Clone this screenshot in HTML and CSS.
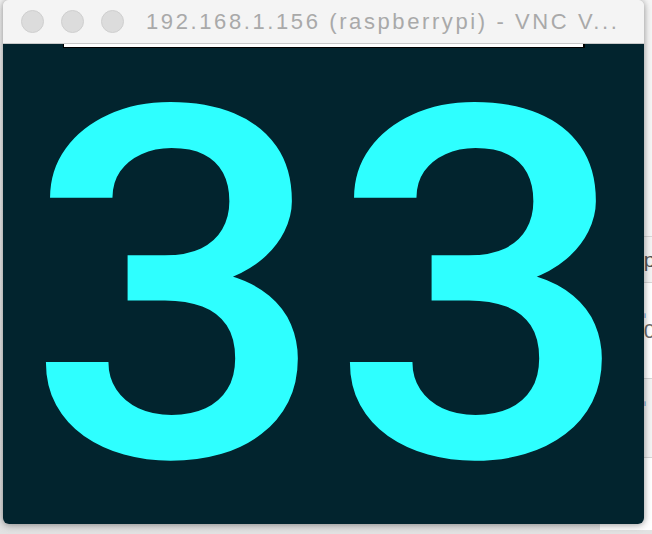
FILE: index.html
```html
<!DOCTYPE html>
<html>
<head>
<meta charset="utf-8">
<link rel="stylesheet" href="styles.css">
</head>
<body>
<div class="desktop">
  <div class="back-window">
    <div class="row row-a"></div>
    <div class="row row-b"><span class="cell">op</span></div>
    <div class="row row-a"><span class="mark">i</span><span class="cell num">20</span></div>
    <div class="row row-b"><span class="mark">i</span><span class="cell num">2</span></div>
    <div class="row row-a"><span class="cell num">2</span></div>
  </div>
  <div class="window">
    <div class="titlebar">
      <div class="lights">
        <span class="light"></span>
        <span class="light"></span>
        <span class="light"></span>
      </div>
      <div class="title">192.168.1.156 (raspberrypi) - VNC V...</div>
    </div>
    <div class="screen">
      <div class="topbar"></div>
      <div class="digits">
        <span class="digit">3</span><span class="digit">3</span>
      </div>
    </div>
  </div>
</div>
</body>
</html>
```
FILE: styles.css
```css
html, body {
  margin: 0;
  padding: 0;
}
body {
  width: 652px;
  height: 534px;
  overflow: hidden;
  background: #ececec;
  font-family: "Liberation Sans", Arial, sans-serif;
}
.desktop {
  position: relative;
  width: 652px;
  height: 534px;
  background: linear-gradient(#f2f2f2, #e2e2e2);
}
.back-window {
  position: absolute;
  left: 600px;
  top: 0;
  width: 200px;
  height: 530px;
  background: #f7f7f7;
  display: flex;
  flex-direction: column;
}
.row {
  display: flex;
  align-items: center;
  border-top: 1px solid #d6d6d6;
  font-size: 21px;
  color: #555;
  box-sizing: border-box;
}
.row-a { background: #ffffff; }
.row-b { background: #f3f3f3; }
.back-window .row:nth-child(1) { height: 236px; border-top: none; background: #f5f5f5; }
.back-window .row:nth-child(2) { height: 46px; }
.back-window .row:nth-child(3) { height: 96px; }
.back-window .row:nth-child(4) { height: 79px; }
.back-window .row:nth-child(5) { flex: 1; }
.cell {
  margin-left: 32px;
}
.num { color: #6a6a6a; }
.mark {
  position: absolute;
  left: 44px;
  color: #3a78c8;
  font-size: 8px;
  margin-top: -30px;
}
.window {
  position: absolute;
  left: 3px;
  top: 0;
  width: 641px;
  height: 524px;
  border-radius: 6px;
  overflow: hidden;
  box-shadow: 0 0 6px rgba(0, 0, 0, 0.28), 0 2px 8px rgba(0, 0, 0, 0.18);
  display: flex;
  flex-direction: column;
}
.titlebar {
  height: 43px;
  flex: none;
  background: #f4f4f4;
  border-bottom: 1px solid #c9c9c9;
  display: flex;
  align-items: center;
  padding-left: 18px;
  gap: 22px;
  white-space: nowrap;
}
.lights {
  display: flex;
  gap: 17px;
}
.light {
  width: 21px;
  height: 21px;
  border-radius: 50%;
  background: #dcdcdc;
  border: 1px solid #cfcfcf;
}
.title {
  font-size: 22px;
  color: #a9a9a9;
  letter-spacing: 2.6px;
}
.screen {
  flex: 1;
  background: #02242e;
  display: flex;
  flex-direction: column;
}
.topbar {
  margin-left: 60px;
  width: 519px;
  height: 3px;
  background: #ffffff;
  border: 1px solid #000;
  border-top: none;
  border-width: 0 2px 1px 1px;
}
.digits {
  margin-top: 56px;
  padding-left: 10px;
  display: flex;
  justify-content: center;
  gap: 24px;
  font-family: Roboto, sans-serif;
  font-weight: 500;
  font-size: 491px;
  line-height: 0.75;
  color: #2effff;
}
.digit {
  display: block;
  transform: scaleX(1.08);
}
```
